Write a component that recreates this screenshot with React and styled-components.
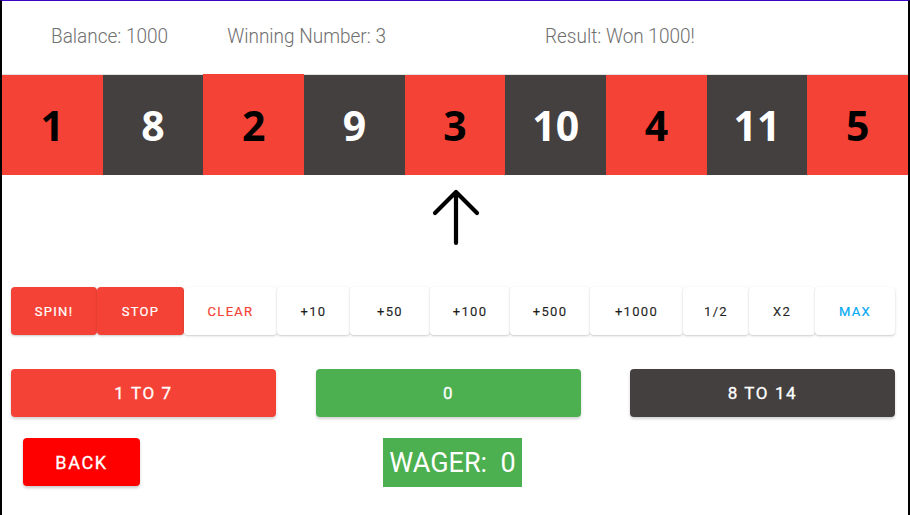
import React from "react";
import styled, { createGlobalStyle } from "styled-components";

const GlobalStyle = createGlobalStyle`
  html, body {
    margin: 0;
    padding: 0;
    background: #fff;
    font-family: Roboto, "Liberation Sans", sans-serif;
  }
`;

const tiles = [1, 8, 2, 9, 3, 10, 4, 11, 5];

const chips = [
  { label: "Spin!", width: 86, tone: "solid" },
  { label: "Stop", width: 87, tone: "solid" },
  { label: "Clear", width: 93, tone: "red" },
  { label: "+10", width: 73 },
  { label: "+50", width: 80 },
  { label: "+100", width: 80 },
  { label: "+500", width: 80 },
  { label: "+1000", width: 93 },
  { label: "1/2", width: 66 },
  { label: "X2", width: 66 },
  { label: "Max", width: 80, tone: "blue" },
];

function App() {
  return (
    <>
      <GlobalStyle />
      <Frame>
        <Header>
          <Stat $gap={49}>Balance: 1000</Stat>
          <Stat $gap={59}>Winning Number: 3</Stat>
          <Stat $gap={159}>Result: Won 1000!</Stat>
        </Header>

        <Strip>
          {tiles.map((n) => (
            <Tile key={n} $dark={n > 7} $lifted={n === 2}>
              {n}
            </Tile>
          ))}
        </Strip>

        <Pointer>
          <svg width="50" height="58" viewBox="0 0 50 58" fill="none">
            <path
              d="M25 4 V55 M4 25 L25 4 L46 25"
              stroke="#000"
              strokeWidth="4.2"
              strokeLinecap="round"
              strokeLinejoin="round"
            />
          </svg>
        </Pointer>

        <ChipBar>
          {chips.map((c) => (
            <Chip key={c.label} $w={c.width} $tone={c.tone}>
              {c.label}
            </Chip>
          ))}
        </ChipBar>

        <BetRow>
          <BetButton $bg="#f44336">1 to 7</BetButton>
          <BetButton $bg="#4caf50" $gap={40}>0</BetButton>
          <BetButton $bg="#454040" $gap={49}>8 to 14</BetButton>
        </BetRow>

        <FooterRow>
          <BackButton>Back</BackButton>
          <Wager>WAGER:&nbsp; 0</Wager>
        </FooterRow>
      </Frame>
    </>
  );
}

export default App;

const Frame = styled.div`
  box-sizing: border-box;
  width: 910px;
  height: 515px;
  border-top: 1px solid #3a06c4;
  border-left: 2px solid #000;
  border-right: 2px solid #000;
  overflow: hidden;
`;

const Header = styled.div`
  display: flex;
  align-items: center;
  height: 73px;
`;

const Stat = styled.div`
  margin-left: ${(p) => p.$gap}px;
  font-size: 19px;
  font-weight: 300;
  color: #6f6f6f;
  padding-bottom: 3px;
  transform: scaleY(1.08);
`;

const Strip = styled.div`
  display: flex;
  height: 101px;
  border-top: 1px solid #e2e2e2;
  box-sizing: border-box;
`;

const Tile = styled.div`
  flex: 1;
  display: flex;
  align-items: center;
  justify-content: center;
  margin-top: ${(p) => (p.$lifted ? "-1px" : "0")};
  background: ${(p) => (p.$dark ? "#454040" : "#f44336")};
  color: ${(p) => (p.$dark ? "#fff" : "#000")};
  font-family: "Open Sans", "DejaVu Sans", sans-serif;
  font-weight: 700;
  font-size: 41px;
`;

const Pointer = styled.div`
  display: flex;
  justify-content: center;
  height: 112px;
  padding-top: 13px;
  box-sizing: border-box;
  padding-left: 2px;
`;

const ChipBar = styled.div`
  display: flex;
  margin-left: 9px;
  height: 48px;
`;

const toneColor = {
  solid: "#fff",
  red: "#f44336",
  blue: "#03a9f4",
};

const Chip = styled.div`
  width: ${(p) => p.$w}px;
  display: flex;
  align-items: center;
  justify-content: center;
  box-sizing: border-box;
  border-radius: 4px;
  background: ${(p) => (p.$tone === "solid" ? "#f44336" : "#fff")};
  color: ${(p) => toneColor[p.$tone] || "rgba(0,0,0,0.85)"};
  box-shadow: 0 1px 3px rgba(0, 0, 0, 0.16), 0 1px 1px rgba(0, 0, 0, 0.06);
  font-size: 13px;
  font-weight: 400;
  letter-spacing: 1.3px;
  text-transform: uppercase;
  -webkit-text-stroke: 0.2px currentColor;
`;

const BetRow = styled.div`
  display: flex;
  margin-top: 34px;
  margin-left: 9px;
`;

const BetButton = styled.div`
  width: 265px;
  height: 48px;
  margin-left: ${(p) => p.$gap || 0}px;
  display: flex;
  align-items: center;
  justify-content: center;
  border-radius: 4px;
  background: ${(p) => p.$bg};
  color: #fff;
  font-size: 17px;
  font-weight: 400;
  letter-spacing: 1.6px;
  text-transform: uppercase;
  -webkit-text-stroke: 0.3px #fff;
  box-shadow: 0 2px 3px rgba(0, 0, 0, 0.18);
`;

const FooterRow = styled.div`
  display: flex;
  align-items: flex-start;
  margin-top: 21px;
  margin-left: 21px;
`;

const BackButton = styled.div`
  width: 117px;
  height: 48px;
  display: flex;
  align-items: center;
  justify-content: center;
  border-radius: 4px;
  background: #ff0000;
  color: #fff;
  font-size: 18px;
  font-weight: 400;
  letter-spacing: 1.6px;
  text-transform: uppercase;
  -webkit-text-stroke: 0.3px #fff;
  box-shadow: 0 2px 3px rgba(0, 0, 0, 0.2);
`;

const Wager = styled.div`
  margin-left: 243px;
  width: 139px;
  height: 49px;
  display: flex;
  align-items: center;
  justify-content: center;
  background: #4caf50;
  color: #fff;
  font-size: 27px;
  font-weight: 400;
`;
